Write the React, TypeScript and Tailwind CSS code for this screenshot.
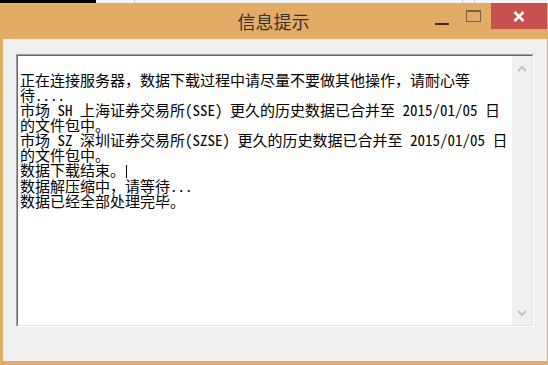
const lines = [
  "正在连接服务器，数据下载过程中请尽量不要做其他操作，请耐心等",
  "待....",
  "市场 SH 上海证券交易所(SSE) 更久的历史数据已合并至 2015/01/05 日",
  "的文件包中。",
  "市场 SZ 深圳证券交易所(SZSE) 更久的历史数据已合并至 2015/01/05 日",
  "的文件包中。",
  "数据下载结束。",
  "数据解压缩中，请等待...",
  "数据已经全部处理完毕。",
];

function Chevron({ up }: { up?: boolean }) {
  return (
    <svg width="10" height="7" viewBox="0 0 10 7" className={up ? "" : "rotate-180"}>
      <path d="M1 6 L5 2 L9 6" fill="none" stroke="#c3c3c3" strokeWidth="2" />
    </svg>
  );
}

export default function App() {
  return (
    <div className="w-[548px] h-[365px] overflow-hidden bg-[#e3ac66] font-['Noto_Sans_CJK_SC',sans-serif]">
      {/* desktop behind the window */}
      <div className="flex h-[3px]">
        <div className="w-[96px] bg-black" />
        <div className="w-[38px] bg-[#f3f3f3]" />
        <div className="w-[328px] bg-[#f3f3f3] border-l border-[#c8c8c8]" />
        <div className="w-[12px] bg-[#f3f3f3] border-l border-[#c8c8c8]" />
        <div className="flex-1 bg-[#f3f3f3] border-l border-[#c8c8c8]" />
      </div>

      {/* title bar */}
      <div className="grid grid-cols-[1fr_auto_1fr] h-[36px] pr-px">
        <div />
        <div className="pt-[4px] text-[18px] leading-[28px] text-[#333]">信息提示</div>
        <div className="flex justify-end items-start">
          <div className="w-[28px] h-[26px] flex items-center justify-center pt-[16px]">
            <div className="w-[14px] h-[2px] bg-[#2e2e2e]" />
          </div>
          <div className="w-[35px] h-[26px] flex justify-center pt-[7px]">
            <div className="w-[15px] h-[12px] border border-t-2 border-[#7d6245]" />
          </div>
          <div className="w-[56px] h-[26px] bg-[#c75050] flex items-center justify-center">
            <svg width="12" height="11" viewBox="0 0 12 11">
              <path d="M1.5 1 L10.5 10 M10.5 1 L1.5 10" stroke="#fff" strokeWidth="2.6" />
            </svg>
          </div>
        </div>
      </div>

      {/* client area */}
      <div className="ml-[3px] mr-px h-[322px] bg-[#f0f0f0] pt-[15px] pl-[13px] pr-[13px]">
        <div className="h-[273px] border border-t-[#a0a0a0] border-l-[#a0a0a0] border-b-white border-r-white">
          <div className="h-full flex border border-t-[#696969] border-l-[#696969] border-b-[#e3e3e3] border-r-[#e3e3e3]">
            <div className="flex-1 bg-white pt-[16px] pl-[2px] text-[15px] leading-[15px] text-black whitespace-pre font-['Noto_Sans_Mono_CJK_SC','Noto_Sans_CJK_SC',monospace]">
              {lines.map((l, i) => (
                <div key={i}>
                  {l}
                  {i === 6 && <span className="inline-block w-px h-[13px] bg-black align-middle ml-[1px]" />}
                </div>
              ))}
            </div>
            <div className="w-[20px] bg-[#f0f0f0] flex flex-col justify-between">
              <div className="h-[24px] flex items-center justify-center">
                <Chevron up />
              </div>
              <div className="h-[24px] flex items-center justify-center">
                <Chevron />
              </div>
            </div>
          </div>
        </div>
      </div>
    </div>
  );
}
